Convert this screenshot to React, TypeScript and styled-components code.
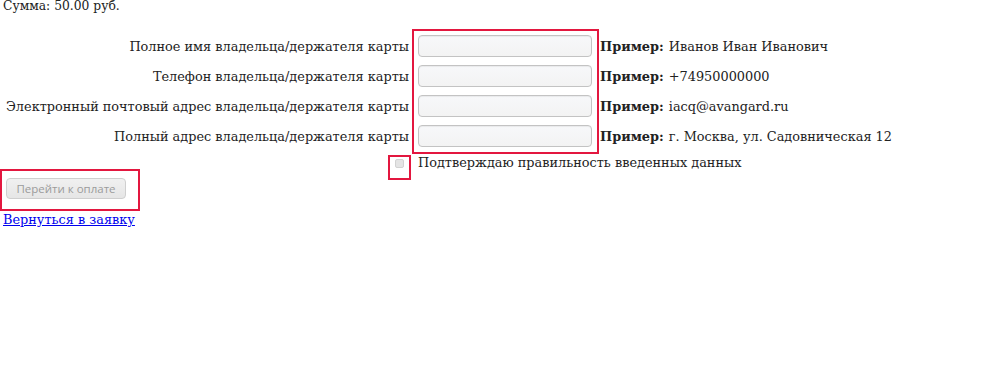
import React from "react";
import styled, { createGlobalStyle } from "styled-components";

const Global = createGlobalStyle`
  html, body { background: #ffffff; }
  body {
    margin: 0;
    padding: 0 3px;
    font-family: "DejaVu Serif", "Liberation Serif", serif;
    font-size: 12.87px;
    color: #222;
  }
`;

const Summary = styled.div`
  height: 16px;
  line-height: 15px;
  margin-top: -1px;
  font-size: 12.3px;
`;

const Form = styled.div`
  display: grid;
  grid-template-columns: 406px 187px auto;
  column-gap: 3px;
  margin-top: 14px;
`;

const Column = styled.div<{ $align?: string }>`
  display: flex;
  flex-direction: column;
  align-items: ${(p) => p.$align || "flex-start"};
  padding-top: 2px;
`;

const Marked = styled(Column)`
  border: 2px solid #e3173f;
  padding: 0 4px 1px 4px;
`;

const Examples = styled(Column)`
  margin-left: -2px;
`;

const Cell = styled.div`
  height: 30px;
  display: flex;
  align-items: center;
  white-space: nowrap;
`;

const Field = styled.div`
  width: 174px;
  height: 22px;
  box-sizing: border-box;
  border: 1px solid #c3c3c3;
  border-radius: 4px;
  background: linear-gradient(#f7f8fa, #f3f3f3);
  box-shadow: inset 0 1px 1px rgba(0, 0, 0, 0.06);
`;

const Bold = styled.b`
  margin-right: 5px;
`;

const ConfirmRow = styled.div`
  display: flex;
  align-items: flex-start;
  margin-top: 1px;
  padding-left: 385px;
`;

const CheckMark = styled.div`
  width: 19px;
  height: 19px;
  border: 2px solid #e3173f;
  display: flex;
  justify-content: center;
  padding-top: 2px;
  box-sizing: content-box;
`;

const Check = styled.span`
  width: 7px;
  height: 7px;
  border: 1px solid #d2d2d2;
  border-radius: 2px;
  background: #e4e4e4;
`;

const ConfirmText = styled.span`
  line-height: 16px;
  margin-left: 7px;
`;

const ButtonBox = styled.div`
  width: 134px;
  height: 28px;
  border: 2px solid #e3173f;
  margin-left: -3px;
  margin-top: -11px;
  padding: 7px 0 3px 2px;
  box-sizing: content-box;
`;

const PayButton = styled.button`
  display: block;
  margin-left: 2px;
  width: 120px;
  height: 21px;
  border: 1px solid #cfcfcf;
  border-radius: 4px;
  background: linear-gradient(#f0f0f0, #e6e6e6);
  color: #9b9b9b;
  font-family: "Open Sans", "DejaVu Sans", sans-serif;
  font-size: 11.5px;
  padding: 0;
`;

const Back = styled.a`
  display: block;
  margin-top: 0;
  color: #0000ee;
  text-decoration: underline;
  line-height: 17px;
`;

const rows = [
  ["Полное имя владельца/держателя карты", "Иванов Иван Иванович"],
  ["Телефон владельца/держателя карты", "+74950000000"],
  ["Электронный почтовый адрес владельца/держателя карты", "iacq@avangard.ru"],
  ["Полный адрес владельца/держателя карты", "г. Москва, ул. Садовническая 12"],
];

export default function App() {
  return (
    <>
      <Global />
      <Summary>Сумма: 50.00 руб.</Summary>
      <Form>
        <Column $align="flex-end">
          {rows.map(([label]) => (
            <Cell key={label}>{label}</Cell>
          ))}
        </Column>
        <Marked>
          {rows.map(([label]) => (
            <Cell key={label}>
              <Field />
            </Cell>
          ))}
        </Marked>
        <Examples>
          {rows.map(([label, example]) => (
            <Cell key={label}>
              <Bold>Пример:</Bold>
              {example}
            </Cell>
          ))}
        </Examples>
      </Form>
      <ConfirmRow>
        <CheckMark>
          <Check />
        </CheckMark>
        <ConfirmText>Подтверждаю правильность введенных данных</ConfirmText>
      </ConfirmRow>
      <ButtonBox>
        <PayButton disabled>Перейти к оплате</PayButton>
      </ButtonBox>
      <Back href="#">Вернуться в заявку</Back>
    </>
  );
}
